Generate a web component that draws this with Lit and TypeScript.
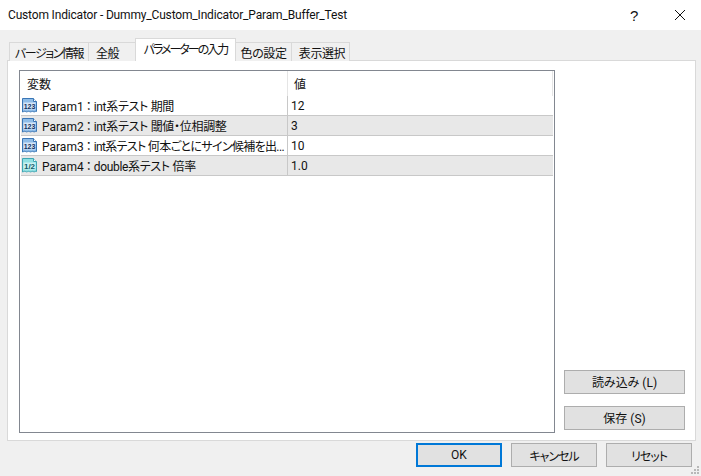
import { LitElement, html, css, svg } from 'lit';
import { customElement } from 'lit/decorators.js';

// spacing squeezes the wide Noto kana down to the width they have in the dialog font
const tabs = [
  { label: 'バージョン情報', width: 80, spacing: -1.4, shift: 0 },
  { label: '全般', width: 48, spacing: -0.5, shift: 9 },
  { label: 'パラメーターの入力', width: 101, spacing: -2, shift: 0, active: true },
  { label: '色の設定', width: 57, spacing: -0.4, shift: 0 },
  { label: '表示選択', width: 59, spacing: -0.4, shift: -3 },
];

const rows = [
  { param: 'Param1', name: 'int系テスト 期間', value: '12', kind: 'int', spacing: -0.3 },
  { param: 'Param2', name: 'int系テスト 閾値・位相調整', value: '3', kind: 'int', spacing: -0.3 },
  { param: 'Param3', name: 'int系テスト 何本ごとにサイン候補を出...', value: '10', kind: 'int', spacing: -0.65 },
  { param: 'Param4', name: 'double系テスト 倍率', value: '1.0', kind: 'double', spacing: -0.3 },
];

// little page icon with a wavy bottom edge, as in the MT4 inputs list
function typeIcon(kind: string) {
  const isInt = kind === 'int';
  const fill = isInt ? '#8fbde8' : '#8fe0e2';
  const light = isInt ? '#d5e6f7' : '#c9f2f2';
  const edge = isInt ? '#3a76b6' : '#3fa6b4';
  const ink = isInt ? '#12325f' : '#125a6a';
  return svg`<svg class="ico" width="17" height="17" viewBox="0 0 17 17">
    <path d="M1.5 1.5H12.5L15.5 4.5V14.5C14.5 13.6 13.6 15.6 12.2 14.6C11 13.7 10 15.6 8.5 14.6C7 13.7 6 15.6 4.7 14.6C3.5 13.7 2.6 14.8 1.5 15Z" fill="${fill}" stroke="${edge}"/>
    <path d="M12.5 1.5V4.5H15.5" fill="#fff" stroke="${edge}"/>
    <rect x="2.5" y="5.5" width="12" height="7" fill="${light}"/>
    <text x="8.5" y="11.8" text-anchor="middle" font-family="Liberation Sans" font-size="${isInt ? 7 : 8}" font-weight="700" fill="${ink}">${isInt ? '123' : '1/2'}</text>
  </svg>`;
}

@customElement('app-root')
export class AppRoot extends LitElement {
  static styles = css`
    :host {
      display: block;
      position: relative;
      width: 701px;
      height: 476px;
      overflow: hidden;
      background: #f0f0f0;
      color: #111;
      font-family: 'Roboto', 'Noto Sans CJK JP', sans-serif;
      font-size: 12px;
      font-feature-settings: 'palt';
    }
    .title {
      height: 30px;
      background: #fff;
      display: flex;
      align-items: center;
      padding-left: 8px;
    }
    .title .text {
      flex: 1;
      white-space: nowrap;
      letter-spacing: -0.17px;
    }
    .title .help {
      width: 12px;
      margin-right: 33px;
      font-size: 15px;
      font-family: 'Liberation Sans', sans-serif;
    }
    .title svg {
      margin-right: 16px;
    }
    .tabs {
      display: flex;
      align-items: flex-end;
      height: 31px;
      margin-bottom: -1px;
      padding-left: 10px;
      position: relative;
    }
    .tab {
      height: 19px;
      box-sizing: border-box;
      display: flex;
      align-items: center;
      justify-content: center;
      background: #f0f0f0;
      border: 1px solid #d9d9d9;
      border-bottom: none;
      margin-left: -1px;
      white-space: nowrap;
    }
    .tab.active {
      height: 23px;
      background: #fff;
      position: relative;
      z-index: 1;
      padding-bottom: 3px;
    }
    .panel {
      width: 689px;
      height: 381px;
      margin-left: 7px;
      box-sizing: border-box;
      background: #fff;
      border: 1px solid #d9d9d9;
      padding: 9px 11px 7px;
      display: flex;
      gap: 9px;
    }
    .list {
      width: 536px;
      box-sizing: border-box;
      border: 1px solid #828790;
      padding: 0 1px;
      flex: none;
    }
    .head,
    .row {
      display: grid;
      grid-template-columns: 266px 1fr;
    }
    .head {
      height: 25px;
      align-items: center;
    }
    .head div {
      height: 100%;
      display: flex;
      align-items: center;
      padding-left: 6px;
    }
    .head div + div {
      border-left: 1px solid #e5e5e5;
      border-right: 1px solid #e5e5e5;
    }
    .row {
      height: 20px;
      box-sizing: border-box;
      border-bottom: 1px solid #c8c8c8;
      align-items: center;
    }
    .row:nth-child(even) {
      background: #e8e8e8;
    }
    .name {
      display: flex;
      align-items: center;
      height: 100%;
      min-width: 0;
      gap: 4px;
      white-space: nowrap;
    }
    .colon {
      display: inline-block;
      width: 10px;
      text-align: center;
    }
    .ico {
      flex: none;
    }
    .val {
      height: 100%;
      border-left: 1px solid #c8c8c8;
      padding-left: 3px;
      display: flex;
      align-items: center;
    }
    .side {
      flex: 1;
      display: flex;
      flex-direction: column;
      justify-content: flex-end;
      gap: 12px;
      padding-bottom: 3px;
    }
    button {
      font: inherit;
      font-feature-settings: inherit;
      color: inherit;
      background: #e1e1e1;
      border: 1px solid #adadad;
      padding: 0 0 2px;
      height: 24px;
      box-sizing: border-box;
    }
    .side button {
      width: 121px;
    }
    .footer {
      display: flex;
      justify-content: flex-end;
      gap: 9px;
      padding: 2px 9px 0 0;
    }
    .footer button {
      width: 86px;
      padding: 0;
      letter-spacing: -1px;
    }
    .footer button.default {
      border: 2px solid #0078d7;
      letter-spacing: 0;
    }
    .grip {
      position: absolute;
      right: 1px;
      bottom: 1px;
    }
  `;

  render() {
    return html`
      <div class="title">
        <div class="text">Custom Indicator - Dummy_Custom_Indicator_Param_Buffer_Test</div>
        <div class="help">?</div>
        <svg width="10" height="10" viewBox="0 0 10 10"><path d="M0 0L10 10M10 0L0 10" stroke="#111" fill="none"/></svg>
      </div>
      <div class="tabs">
        ${tabs.map(
          (t) => html`<div
            class="tab ${t.active ? 'active' : ''}"
            style="width:${t.width}px;letter-spacing:${t.spacing}px;padding-right:${Math.max(t.shift, 0)}px;padding-left:${Math.max(-t.shift, 0)}px"
          >
            ${t.label}
          </div>`
        )}
      </div>
      <div class="panel">
        <div class="list">
          <div class="head"><div>変数</div><div>値</div></div>
          <div>
            ${rows.map(
              (r) => html`<div class="row">
                <div class="name">
                  ${typeIcon(r.kind)}<span>${r.param}<span class="colon">：</span><span style="letter-spacing:${r.spacing}px">${r.name}</span></span>
                </div>
                <div class="val">${r.value}</div>
              </div>`
            )}
          </div>
        </div>
        <div class="side">
          <button>読み込み (L)</button>
          <button>保存 (S)</button>
        </div>
      </div>
      <div class="footer">
        <button class="default">OK</button>
        <button>キャンセル</button>
        <button>リセット</button>
      </div>
      <svg class="grip" width="9" height="9" viewBox="0 0 9 9" fill="#b8b8b8">
        <rect x="6" y="0" width="2" height="2"/>
        <rect x="3" y="3" width="2" height="2"/><rect x="6" y="3" width="2" height="2"/>
        <rect x="0" y="6" width="2" height="2"/><rect x="3" y="6" width="2" height="2"/><rect x="6" y="6" width="2" height="2"/>
      </svg>
    `;
  }
}
